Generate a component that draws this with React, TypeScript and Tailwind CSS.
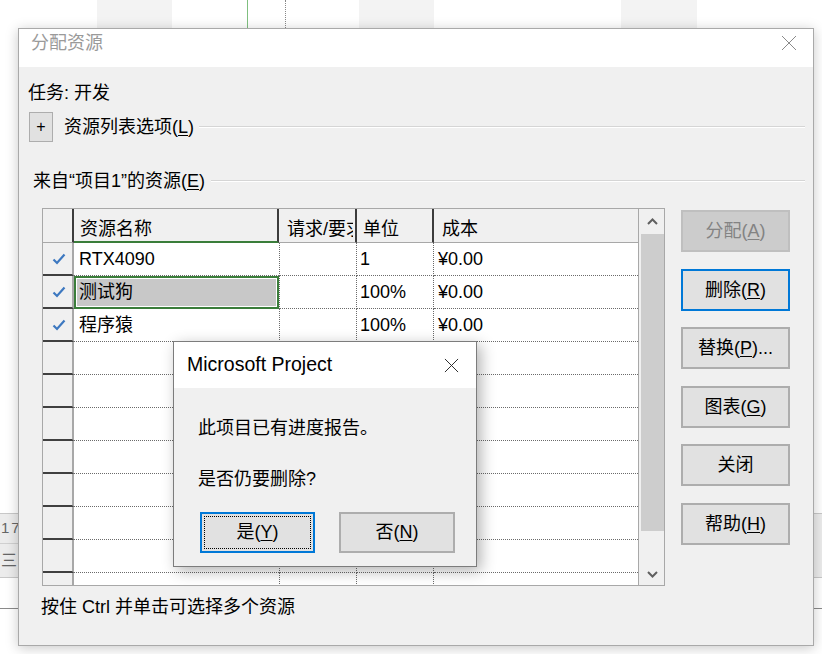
import React from 'react'

const FONT = "font-['Liberation_Sans','Noto_Sans_CJK_SC',sans-serif]"

function Mn({ k }: { k: string }) {
  return (
    <>
      (<span className="underline underline-offset-2">{k}</span>)
    </>
  )
}

function Check() {
  return (
    <svg width="14" height="12" viewBox="0 0 14 12">
      <path d="M1.5 6.5 L5 10 L12.5 1.5" fill="none" stroke="#3d78c0" strokeWidth="2.2" />
    </svg>
  )
}

function CloseX({ size, color }: { size: number; color: string }) {
  return (
    <svg width={size} height={size} viewBox="0 0 16 16">
      <path d="M1 1 L15 15 M15 1 L1 15" stroke={color} strokeWidth="1" fill="none" />
    </svg>
  )
}

const ROWS = [
  { name: 'RTX4090', unit: '1', cost: '¥0.00' },
  { name: '测试狗', unit: '100%', cost: '¥0.00', selected: true },
  { name: '程序猿', unit: '100%', cost: '¥0.00' },
  ...Array.from({ length: 8 }, () => ({ name: '', unit: '', cost: '' })),
]

function Grid() {
  return (
    <div className="flex h-[378px] w-[623px] overflow-hidden border border-[#a8a8a8] bg-white">
      <div className="flex flex-1 flex-col overflow-hidden">
        {/* header */}
        <div className="flex h-[34px] shrink-0 bg-[#f0f0f0] text-[18px] text-black">
          <div className="w-[31px] border-r-2 border-[#3c3c3c] border-b border-b-[#a8a8a8]" />
          <div className="flex w-[205px] items-center border-r-2 border-[#3c3c3c] border-b-2 border-b-[#3a7d3a] pt-[8px] pl-[6px]">资源名称</div>
          <div className="flex w-[78px] items-center overflow-hidden whitespace-nowrap border-r-2 border-[#3c3c3c] border-b border-b-[#a8a8a8] pt-[8px] pl-[8px]">
            <span className="block w-[66px] overflow-hidden">请求/要求</span>
          </div>
          <div className="flex w-[77px] items-center border-r-2 border-[#3c3c3c] border-b border-b-[#a8a8a8] pt-[8px] pl-[6px]">单位</div>
          <div className="flex flex-1 items-center border-b border-[#a8a8a8] pt-[8px] pl-[8px]">成本</div>
        </div>
        {ROWS.map((r, i) => (
          <div key={i} className="flex h-[33px] shrink-0 text-[18px] text-black">
            <div className="flex w-[31px] items-center justify-center border-r-2 border-r-[#a8a8a8] border-b-2 border-b-[#404040] bg-[#f0f0f0] pl-[2px]">
              {i < 3 && <Check />}
            </div>
            {r.selected ? (
              <div className="w-[205px] border-2 border-[#3a7d3a] p-[1px]">
                <div className="flex h-full items-center bg-[#c8c8c8] pl-[2px]">{r.name}</div>
              </div>
            ) : (
              <div className="flex w-[205px] items-center border-b border-dotted border-[#6a6a6a] pl-[5px]">{r.name}</div>
            )}
            <div className="w-[78px] border-x border-b border-dotted border-[#6a6a6a]" />
            <div className="flex w-[77px] items-center border-r border-b border-dotted border-[#6a6a6a] pl-[3px]">{r.unit}</div>
            <div className="flex flex-1 items-center border-b border-dotted border-[#6a6a6a] pl-[4px]">{r.cost}</div>
          </div>
        ))}
      </div>
      {/* scrollbar */}
      <div className="flex w-[26px] flex-col border-l border-[#a8a8a8] bg-[#f0f0f0] pl-[2px]">
        <div className="flex h-[25px] items-center justify-center">
          <svg width="11" height="7" viewBox="0 0 11 7">
            <path d="M1 6 L5.5 1.5 L10 6" fill="none" stroke="#606060" strokeWidth="2" />
          </svg>
        </div>
        <div className="h-[297px] bg-[#cdcdcd]" />
        <div className="flex flex-1 items-end justify-center pb-[7px]">
          <svg width="11" height="7" viewBox="0 0 11 7">
            <path d="M1 1 L5.5 5.5 L10 1" fill="none" stroke="#606060" strokeWidth="2" />
          </svg>
        </div>
      </div>
    </div>
  )
}

function Btn({ children, variant, className }: { children: React.ReactNode; variant?: 'disabled' | 'focus'; className?: string }) {
  const look =
    variant === 'disabled'
      ? 'bg-[#cccccc] border-[#bfbfbf] text-[#838383]'
      : variant === 'focus'
        ? 'bg-[#e1e1e1] border-[#0078d7] text-black'
        : 'bg-[#e1e1e1] border-[#adadad] text-black'
  return (
    <div className={`flex h-[42px] w-[109px] items-center justify-center border-2 text-[18px] ${look} ${className ?? ''}`}>
      {children}
    </div>
  )
}

function MessageBox() {
  return (
    <div className="absolute left-[173px] top-[341px] flex h-[226px] w-[304px] flex-col border border-[#7c7c7c] shadow-[4px_4px_14px_rgba(0,0,0,0.3)]">
      <div className="flex h-[46px] items-center justify-between bg-white pl-[13px] pr-[17px] text-[19.5px] text-black">
        <span>Microsoft Project</span>
        <CloseX size={15} color="#222" />
      </div>
      <div className="flex flex-1 flex-col bg-[#f0f0f0] pl-[24px] text-[18px] text-black">
        <div className="mt-[29px] h-[22px] leading-[22px]">此项目已有进度报告。</div>
        <div className="mt-[29px] h-[22px] leading-[22px]">是否仍要删除?</div>
        <div className="mt-[22px] flex gap-[24px] pl-[2px]">
          <div className="flex h-[41px] w-[115px] border-2 border-[#0078d7] bg-[#e1e1e1] p-[2px]">
            <div className="flex flex-1 items-center justify-center border border-dotted border-black">
              是<Mn k="Y" />
            </div>
          </div>
          <div className="flex h-[41px] w-[116px] items-center justify-center border-2 border-[#adadad] bg-[#e1e1e1]">
            否<Mn k="N" />
          </div>
        </div>
      </div>
    </div>
  )
}

export default function App() {
  return (
    <div className={`relative h-[654px] w-[822px] overflow-hidden bg-white ${FONT}`}>
      {/* background project window */}
      <div className="absolute left-[97px] top-0 h-[40px] w-[75px] bg-[#f3f3f3]" />
      <div className="absolute left-[359px] top-0 h-[40px] w-[75px] bg-[#f3f3f3]" />
      <div className="absolute left-[621px] top-0 h-[40px] w-[76px] bg-[#f3f3f3]" />
      <div className="absolute left-[247px] top-0 h-[40px] w-px bg-[#7fbf7f]" />
      <div className="absolute left-[285px] top-0 h-[40px] border-l border-dotted border-[#888]" />
      <div className="absolute left-0 top-[513px] flex h-[65px] w-[30px] flex-col border-y border-[#c8c8c8] bg-[#ececec] text-[15px] text-[#666]">
        <div className="flex h-[30px] items-center border-b border-[#d0d0d0] pl-[1px] tracking-[2px]">17</div>
        <div className="flex flex-1 items-center pl-[1px] text-[16px]">三</div>
      </div>
      <div className="absolute left-0 top-[608px] h-px w-[30px] bg-[#8a8a8a]" />
      <div className="absolute left-[800px] top-[513px] h-[65px] w-[30px] border-y border-[#c8c8c8] bg-[#ececec]" />
      <div className="absolute left-[800px] top-[608px] h-px w-[30px] bg-[#8a8a8a]" />

      {/* 分配资源 dialog */}
      <div className="absolute left-[18px] top-[28px] flex h-[618px] w-[796px] flex-col border border-[#a9a9a9] shadow-[0_2px_12px_rgba(0,0,0,0.22)]">
        <div className="flex h-[38px] shrink-0 items-start justify-between bg-white pl-[12px] pr-[16px] pt-[3px] text-[18px] text-[#9a9a9a]">
          <span className="leading-[22px]">分配资源</span>
          <div className="pt-[3px]">
            <CloseX size={16} color="#8a8a8a" />
          </div>
        </div>
        <div className="flex flex-1 flex-col bg-[#f0f0f0] text-[18px] text-black">
          <div className="mt-[15px] h-[22px] pl-[9px] leading-[22px]">任务: 开发</div>
          <div className="mt-[8px] flex items-center pl-[10px] pr-[8px]">
            <div className="flex h-[30px] w-[24px] items-center justify-center border border-[#adadad] bg-[#e1e1e1] text-[16px]">+</div>
            <span className="ml-[11px] leading-[22px]">
              资源列表选项<Mn k="L" />
            </span>
            <div className="ml-[5px] h-[2px] flex-1 border-t border-[#d5d5d5] bg-white" />
          </div>
          <div className="mt-[27px] flex h-[24px] items-center pl-[14px] pr-[8px]">
            <span className="leading-[22px]">
              来自“项目1”的资源<Mn k="E" />
            </span>
            <div className="ml-[6px] h-[2px] flex-1 border-t border-[#d5d5d5] bg-white" />
          </div>
          <div className="mt-[15px] flex gap-[16px] pl-[23px]">
            <Grid />
            <div className="flex flex-col pt-[2px]">
              <Btn variant="disabled">
                分配<Mn k="A" />
              </Btn>
              <Btn variant="focus" className="mt-[17px]">
                删除<Mn k="R" />
              </Btn>
              <Btn className="mt-[16px]">
                替换<Mn k="P" />...
              </Btn>
              <Btn className="mt-[17px]">
                图表<Mn k="G" />
              </Btn>
              <Btn className="mt-[16px]">关闭</Btn>
              <Btn className="mt-[17px]">
                帮助<Mn k="H" />
              </Btn>
            </div>
          </div>
          <div className="mt-[10px] h-[22px] pl-[22px] leading-[22px]">按住 Ctrl 并单击可选择多个资源</div>
        </div>
      </div>

      <MessageBox />
    </div>
  )
}
